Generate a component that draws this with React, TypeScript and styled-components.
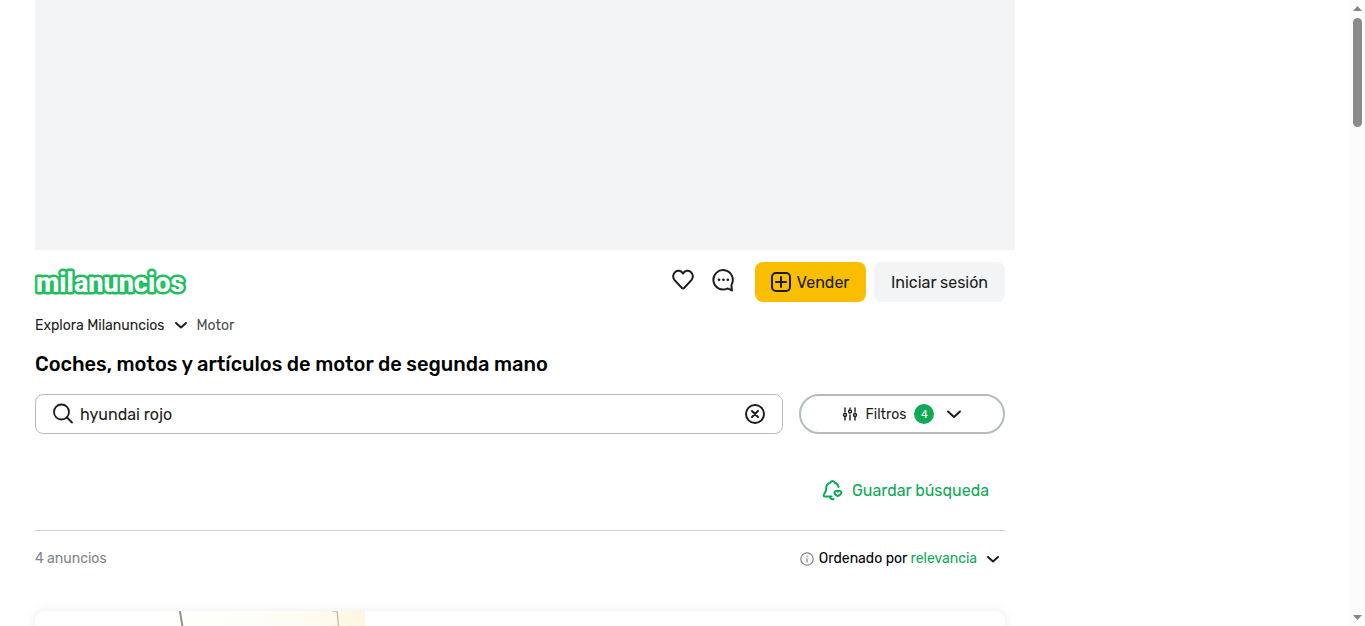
import React, { useState } from "react";
import styled, { createGlobalStyle } from "styled-components";

const GlobalStyle = createGlobalStyle`
  *, *::before, *::after { box-sizing: border-box; }
  body {
    margin: 0;
    background: #fff;
    color: #1b1d21;
    font-family: Rubik, Roboto, "Liberation Sans", sans-serif;
    font-size: 16px;
  }
  button, input { font: inherit; color: inherit; }
  button { padding: 0; border: 0; background: none; cursor: pointer; }
  a { color: inherit; text-decoration: none; }
  svg { display: block; flex: none; }
`;

const Viewport = styled.div`
  display: flex;
  height: 100vh;
  overflow: hidden;
`;

const Page = styled.div`
  flex: 1;
  min-width: 0;
  padding-left: 35px;
  overflow: hidden;
`;

const AdSlot = styled.div`
  height: 250px;
  max-width: 980px;
  background: #f3f4f6;
`;

const Content = styled.div`
  max-width: 970px;
`;

const Header = styled.header`
  display: flex;
  align-items: center;
  justify-content: space-between;
  padding-top: 12px;
`;

const Actions = styled.div`
  display: flex;
  align-items: center;
  gap: 8px;
`;

const IconButton = styled.button`
  display: flex;
  align-items: center;
  justify-content: center;
  width: 32px;
  height: 36px;
  margin-bottom: 4px;
`;

const Button = styled.button<{ $tone: "primary" | "neutral" }>`
  display: flex;
  align-items: center;
  justify-content: center;
  gap: 5px;
  width: ${(p) => (p.$tone === "primary" ? "111px" : "131px")};
  height: 40px;
  padding-right: ${(p) => (p.$tone === "primary" ? "2px" : "0")};
  border-radius: 8px;
  background: ${(p) => (p.$tone === "primary" ? "#fabe00" : "#f3f4f6")};
  margin-left: ${(p) => (p.$tone === "primary" ? "8px" : "0")};
`;

const Breadcrumb = styled.nav`
  display: flex;
  align-items: center;
  gap: 9px;
  height: 46px;
  font-size: 14px;
`;

const Explore = styled.button`
  display: flex;
  align-items: center;
  gap: 9px;
`;

const Crumb = styled.a`
  color: #4b4d50;
`;

const Title = styled.h1`
  margin: 0;
  padding-bottom: 14px;
  color: #000;
  font-size: 20px;
  line-height: 32px;
  font-weight: 500;
`;

const SearchRow = styled.form`
  display: flex;
  gap: 16px;
`;

const SearchBox = styled.label`
  display: flex;
  flex: 1;
  align-items: center;
  gap: 6px;
  height: 40px;
  padding: 0 15px 0 16px;
  border: 1px solid #b4bcc0;
  border-radius: 8px;
`;

const SearchInput = styled.input`
  flex: 1;
  min-width: 0;
  padding: 0;
  border: 0;
  outline: 0;
  background: none;
`;

const FilterButton = styled.button`
  display: flex;
  align-items: center;
  justify-content: center;
  gap: 8px;
  width: 206px;
  height: 40px;
  border: 2px solid #b4bcc0;
  border-radius: 20px;
  font-size: 14px;
`;

const Count = styled.span`
  display: flex;
  align-items: center;
  justify-content: center;
  width: 20px;
  height: 20px;
  margin-right: 4px;
  border-radius: 50%;
  background: #0fa958;
  color: #fff;
  font-size: 11px;
`;

const SaveRow = styled.div`
  display: flex;
  justify-content: flex-end;
  padding: 36px 16px 20px;
  border-bottom: 1px solid #cfd2d4;
`;

const SaveButton = styled.button`
  display: flex;
  align-items: center;
  gap: 8px;
  height: 40px;
  color: #0fa958;
`;

const ResultsBar = styled.div`
  display: flex;
  align-items: center;
  justify-content: space-between;
  height: 55px;
  font-size: 14px;
`;

const ResultCount = styled.span`
  color: #7d868c;
`;

const SortButton = styled.button`
  display: flex;
  align-items: center;
  gap: 5px;
  padding-right: 5px;
  color: #000;
`;

const SortValue = styled.span`
  margin-right: 4px;
  color: #0fa958;
`;

const Card = styled.article`
  margin-top: 25px;
  height: 200px;
  overflow: hidden;
  border-radius: 10px;
  background: #fff;
  box-shadow: 0 0 12px 2px #eff3f2;
`;

const ScrollTrack = styled.div`
  display: flex;
  flex-direction: column;
  align-items: center;
  width: 15px;
  padding: 6px 0;
  background: #fcfcfc;
`;

const ScrollThumb = styled.div`
  width: 9px;
  height: 109px;
  margin: 7px 0 auto;
  border-radius: 5px;
  background: #8b8b8b;
`;

const Logo = () => (
  <svg width="154" height="30" viewBox="0 0 154 30" overflow="visible" role="img" aria-label="milanuncios">
    <text
      x="1"
      y="25"
      fontFamily="Roboto, sans-serif"
      fontSize="27"
      fontWeight="800"
      fill="#fff"
      stroke="#1fbf5f"
      strokeWidth="5"
      strokeLinejoin="round"
      paintOrder="stroke"
    >
      milanuncios
    </text>
  </svg>
);

const Chevron = ({ wide }: { wide?: boolean }) => (
  <svg width={wide ? 16 : 14} height={wide ? 10 : 8} viewBox={wide ? "0 0 16 10" : "0 0 14 8"} fill="none" stroke="#1b1d21" strokeWidth="2" strokeLinecap="round" strokeLinejoin="round">
    <path d={wide ? "M2 2.500 8 8l6-5.500" : "M2 2 7 6.500l5-4.500"} />
  </svg>
);

const Heart = () => (
  <svg width="24" height="24" viewBox="0 0 24 24" fill="none" stroke="#1b1d21" strokeWidth="2" strokeLinejoin="round">
    <path d="M12 5.400C10.100 2.400 6.500 1.900 4.200 3.900 1.700 6 1.500 9.500 3.400 11.800L10.900 20c.7.700 1.500.7 2.200 0l7.500-8.200c1.900-2.300 1.700-5.800-.8-7.900-2.300-2-5.900-1.500-7.800 1.500Z" />
  </svg>
);

const Chat = () => (
  <svg width="24" height="24" viewBox="0 0 24 24" fill="none" stroke="#1b1d21" strokeWidth="2" strokeLinecap="round" strokeLinejoin="round">
    <path d="M16.200 20.600A9.700 9.700 0 1 1 20.800 16.100c-.3.700-.4 1.300-.3 2l.4 4.300-3.200-1.500c-.5-.3-.9-.4-1.500-.3Z" />
    <path d="M8 11.800h.1M12.400 11.800h.1M16.800 11.800h.1" strokeWidth="2.600" />
  </svg>
);

const PlusSquare = () => (
  <svg width="22" height="22" viewBox="0 0 22 22" fill="none" stroke="#1b1d21" strokeWidth="2" strokeLinecap="round">
    <rect x="2" y="2" width="18" height="18" rx="4" />
    <path d="M11 6v10M6 11h10" />
  </svg>
);

const SearchIcon = () => (
  <svg width="22" height="22" viewBox="0 0 22 22" fill="none" stroke="#1b1d21" strokeWidth="1.800" strokeLinecap="round">
    <circle cx="9.500" cy="9" r="7.500" />
    <path d="m15 14.500 5 5" />
  </svg>
);

const ClearIcon = () => (
  <svg width="24" height="24" viewBox="0 0 24 24" fill="none" stroke="#1b1d21" strokeWidth="2" strokeLinecap="round">
    <circle cx="12" cy="12" r="9" />
    <path d="m9 9 6 6m0-6-6 6" />
  </svg>
);

const Sliders = () => (
  <svg width="16" height="16" viewBox="0 0 16 16" fill="none" stroke="#1b1d21" strokeWidth="1.400" strokeLinecap="round">
    <path d="M3 2v4M3 11v3M8 2v1M8 9v5M13 2v4M13 11v3" />
    <circle cx="3" cy="9" r="1.500" />
    <circle cx="8" cy="5.500" r="1.500" />
    <circle cx="13" cy="9" r="1.500" />
  </svg>
);

const BellHeart = () => (
  <svg width="22" height="22" viewBox="0 0 22 22" fill="none" stroke="#0fa958" strokeWidth="2" strokeLinecap="round" strokeLinejoin="round">
    <path d="M16.500 8C16 5.600 14.700 4.400 12.800 3.700 12.300 1.300 8.700 1.300 8.200 3.700 5.700 4.400 4.200 6.300 4.200 9c0 3-.5 4.200-2.100 6.200-1 1.300-.5 2.300 1 2.300h6.400" />
    <path d="M8 18c.3 2 2 2.600 3.500 2" />
    <path d="M15.800 12.600c-1-1.400-3.400-.8-3.400 1 0 1.500 1.600 2.700 3.400 3.600 1.800-.9 3.600-2.100 3.600-3.600 0-1.800-2.500-2.400-3.600-1Z" />
  </svg>
);

const Info = () => (
  <svg width="14" height="14" viewBox="0 0 14 14" fill="none" stroke="#7d868c" strokeWidth="1.200">
    <circle cx="7" cy="7" r="6.200" />
    <path d="M7 6.200V10.500M7 3.500v1.300" />
  </svg>
);

const ScrollArrow = ({ down }: { down?: boolean }) => (
  <svg width="9" height="5" viewBox="0 0 9 5" fill="#858585">
    <path d={down ? "M0 0h9L4.500 5Z" : "M0 5h9L4.500 0Z"} />
  </svg>
);

const CardPhoto = () => (
  <svg width="330" height="200" viewBox="0 0 330 200" aria-hidden="true">
    <defs>
      <linearGradient id="sky">
        <stop offset="0.350" stopColor="#fff" />
        <stop offset="0.500" stopColor="#fffefa" />
        <stop offset="0.800" stopColor="#fffcf5" />
        <stop offset="1" stopColor="#fff6de" />
      </linearGradient>
    </defs>
    <rect width="330" height="200" fill="url(#sky)" />
    <path d="M145 0q1 8 4 24" fill="none" stroke="#90928c" strokeWidth="2" />
    <path d="M297 0h5q1 7 2 24" fill="none" stroke="#c4c1b5" strokeWidth="1.500" />
  </svg>
);

export default function App() {
  const [query, setQuery] = useState("hyundai rojo");
  return (
    <>
      <GlobalStyle />
      <Viewport>
        <Page>
          <AdSlot />
          <Content>
            <Header>
              <a href="#inicio" aria-label="milanuncios"><Logo /></a>
              <Actions>
                <IconButton aria-label="Favoritos"><Heart /></IconButton>
                <IconButton aria-label="Mensajes"><Chat /></IconButton>
                <Button $tone="primary"><PlusSquare />Vender</Button>
                <Button $tone="neutral">Iniciar sesión</Button>
              </Actions>
            </Header>
            <Breadcrumb aria-label="Categorías">
              <Explore>Explora Milanuncios<Chevron /></Explore>
              <Crumb href="#motor">Motor</Crumb>
            </Breadcrumb>
            <Title>Coches, motos y artículos de motor de segunda mano</Title>
            <SearchRow onSubmit={(e) => e.preventDefault()}>
              <SearchBox>
                <SearchIcon />
                <SearchInput aria-label="Buscar" value={query} onChange={(e) => setQuery(e.target.value)} />
                <button type="button" aria-label="Borrar" onClick={() => setQuery("")}><ClearIcon /></button>
              </SearchBox>
              <FilterButton type="button">
                <Sliders />Filtros<Count>4</Count><Chevron wide />
              </FilterButton>
            </SearchRow>
            <SaveRow>
              <SaveButton><BellHeart />Guardar búsqueda</SaveButton>
            </SaveRow>
            <ResultsBar>
              <ResultCount>4 anuncios</ResultCount>
              <SortButton>
                <Info />
                <span>Ordenado por <SortValue>relevancia</SortValue></span>
                <Chevron />
              </SortButton>
            </ResultsBar>
            <Card><CardPhoto /></Card>
          </Content>
        </Page>
        <ScrollTrack aria-hidden="true">
          <ScrollArrow />
          <ScrollThumb />
          <ScrollArrow down />
        </ScrollTrack>
      </Viewport>
    </>
  );
}
